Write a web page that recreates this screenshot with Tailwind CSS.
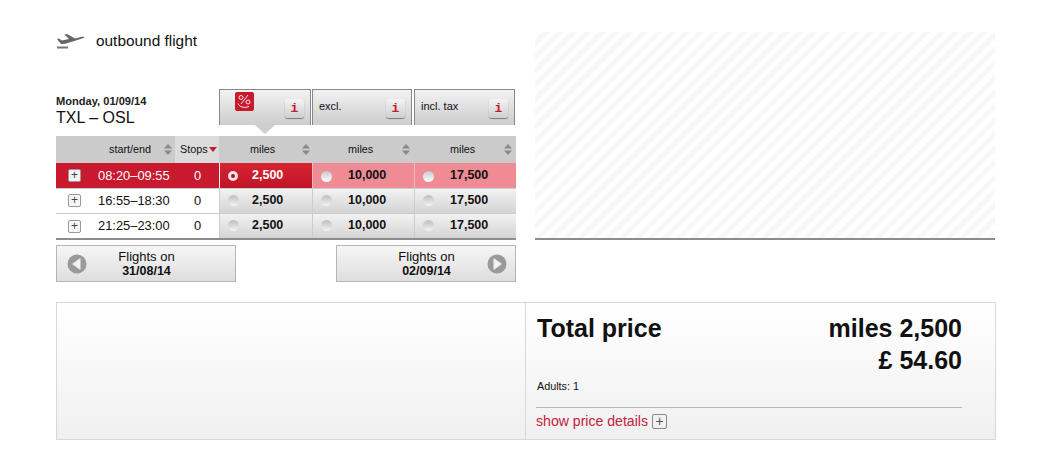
<!DOCTYPE html>
<html lang="en">
<head>
  <meta charset="UTF-8" />
  <title>outbound flight</title>
  <script src="https://cdn.jsdelivr.net/npm/@tailwindcss/browser@4"></script>
</head>
<body class="bg-white font-['Liberation_Sans',Arial,sans-serif] text-[#111]">
  <div class="w-[1048px] h-[450px] overflow-hidden pt-[32px] pl-[56px]">
    <div class="flex h-[250px]">

      <!-- left column -->
      <div class="w-[460px]">
        <div class="h-[57px] flex items-start">
          <svg class="w-[28px] h-[15px] mt-[2px] ml-[1px]" viewBox="0 0 28 15">
            <path fill="#666" d="M0 5l2-.5 3 2 7-1.500L7.500.5 10 0l8 4.500 6-1.500c2-.5 3-.3 3.300 0 0 .7-1 1.200-3 1.800L14 8l-6 1.700L4 10z"/>
            <rect x="0" y="12.500" width="11" height="2" fill="#777"/>
          </svg>
          <span class="ml-[11px] text-[15.400px] leading-[18px]">outbound flight</span>
        </div>

        <!-- tabs -->
        <div class="flex h-[47px] items-end">
          <div class="w-[163px] pb-[7px]">
            <div class="text-[11.100px] leading-[12px] font-bold text-[#222]">Monday, 01/09/14</div>
            <div class="text-[16px] leading-[22px]">TXL – OSL</div>
          </div>
          <div class="relative w-[92px] h-[36px] mb-[11px] border border-b-0 border-[#888] bg-linear-to-b from-[#f2f2f2] to-[#cdcdcd]">
            <svg class="absolute left-[15px] top-[2px] w-[19px] h-[19px]" viewBox="0 0 19 19">
              <rect width="19" height="19" rx="2" fill="#c8192e"/>
              <circle cx="6" cy="5.500" r="2" fill="none" stroke="#fff" stroke-width="0.900"/>
              <circle cx="13" cy="10" r="2" fill="none" stroke="#fff" stroke-width="0.900"/>
              <path d="M13 3L6 12M3 11.500c1.500 3.500 6 5 11 3" fill="none" stroke="#fff" stroke-width="0.900"/>
            </svg>
            <span class="absolute right-[6px] top-[9px] w-[19px] h-[19px] rounded-[3px] bg-linear-to-b from-[#f4f4f4] to-[#cfcfcf] shadow-[0_1px_1px_#777] text-center font-['Liberation_Mono',monospace] font-bold text-[13px] leading-[19px] text-[#c8192e]">i</span>
            <span class="absolute left-[35px] top-[35px] w-0 h-0 border-x-[10px] border-x-transparent border-t-[9px] border-t-[#cdcdcd]"></span>
          </div>
          <div class="relative w-[100px] h-[36px] mb-[11px] ml-px border border-b-0 border-[#888] bg-linear-to-b from-[#f2f2f2] to-[#cdcdcd] pl-[6px] pt-[10px] text-[11px] leading-[13px]">
            excl.
            <span class="absolute right-[6px] top-[9px] w-[19px] h-[19px] rounded-[3px] bg-linear-to-b from-[#f4f4f4] to-[#cfcfcf] shadow-[0_1px_1px_#777] text-center font-['Liberation_Mono',monospace] font-bold text-[13px] leading-[19px] text-[#c8192e]">i</span>
          </div>
          <div class="relative w-[101px] h-[36px] mb-[11px] ml-[2px] border border-b-0 border-[#888] bg-linear-to-b from-[#f2f2f2] to-[#cdcdcd] pl-[6px] pt-[10px] text-[11px] leading-[13px]">
            incl. tax
            <span class="absolute right-[6px] top-[9px] w-[19px] h-[19px] rounded-[3px] bg-linear-to-b from-[#f4f4f4] to-[#cfcfcf] shadow-[0_1px_1px_#777] text-center font-['Liberation_Mono',monospace] font-bold text-[13px] leading-[19px] text-[#c8192e]">i</span>
          </div>
        </div>

        <!-- flight table -->
        <div class="border-b-2 border-[#8c8c8c]">
          <div class="grid grid-cols-[119px_44px_93px_102px_102px] h-[27px] bg-[#cbcbcb] text-[10.800px] items-center">
            <div class="relative h-full leading-[27px] pl-[53px]">start/end
              <svg class="absolute left-[108px] top-[8px] w-[8px] h-[11px]" viewBox="0 0 8 11"><path fill="#8a8a8a" d="M4 0l4 4.500H0zM4 11L0 6.500h8z"/></svg>
            </div>
            <div class="relative h-full leading-[27px] bg-[#dcdcdc] pl-[5px]">Stops
              <svg class="absolute left-[34px] top-[11px] w-[8px] h-[5px]" viewBox="0 0 8 5"><path fill="#c8192e" d="M0 0h8L4 5z"/></svg>
            </div>
            <div class="relative h-full leading-[27px] pl-[31px]">miles
              <svg class="absolute left-[83px] top-[8px] w-[8px] h-[11px]" viewBox="0 0 8 11"><path fill="#8a8a8a" d="M4 0l4 4.500H0zM4 11L0 6.500h8z"/></svg>
            </div>
            <div class="relative h-full leading-[27px] pl-[36px]">miles
              <svg class="absolute left-[90px] top-[8px] w-[8px] h-[11px]" viewBox="0 0 8 11"><path fill="#8a8a8a" d="M4 0l4 4.500H0zM4 11L0 6.500h8z"/></svg>
            </div>
            <div class="relative h-full leading-[27px] pl-[36px]">miles
              <svg class="absolute left-[90px] top-[8px] w-[8px] h-[11px]" viewBox="0 0 8 11"><path fill="#8a8a8a" d="M4 0l4 4.500H0zM4 11L0 6.500h8z"/></svg>
            </div>
          </div>

          <!-- selected row -->
          <div class="grid grid-cols-[163px_93px_102px_102px] h-[25px] text-[12.900px] leading-[25px]">
            <div class="flex bg-[#c8192e] text-white">
              <span class="w-[13px] h-[13px] mt-[6px] ml-[12px] rounded-[2px] border border-[#999] bg-[#f2f2f2] text-[#444] text-center text-[12px] leading-[10px]">+</span>
              <span class="ml-[17px] w-[72px]">08:20–09:55</span>
              <span class="ml-[24px]">0</span>
            </div>
            <div class="flex border-l border-white bg-linear-to-b from-[#d6242f] to-[#c01528] text-white font-bold text-[12.500px]">
              <span class="w-[10px] h-[10px] mt-[8px] ml-[8px] rounded-full bg-[#b01020] border-[3px] border-[#f4e4e6]"></span>
              <span class="ml-[14px]">2,500</span>
            </div>
            <div class="flex border-l border-[#f3b8bd] bg-[#ee8b94] font-bold text-[12.500px]">
              <span class="w-[11px] h-[11px] mt-[8px] ml-[8px] rounded-full bg-linear-to-b from-[#c9c9c9] to-white"></span>
              <span class="ml-[16px]">10,000</span>
            </div>
            <div class="flex border-l border-[#f3b8bd] bg-[#ee8b94] font-bold text-[12.500px]">
              <span class="w-[11px] h-[11px] mt-[8px] ml-[8px] rounded-full bg-linear-to-b from-[#c9c9c9] to-white"></span>
              <span class="ml-[16px]">17,500</span>
            </div>
          </div>

          <div class="grid grid-cols-[163px_93px_102px_102px] h-[25px] text-[12.900px] leading-[23px] border-t border-[#ccc]">
            <div class="flex bg-white">
              <span class="w-[13px] h-[13px] mt-[5px] ml-[12px] rounded-[2px] border border-[#999] bg-[#f6f6f6] text-[#444] text-center text-[12px] leading-[10px]">+</span>
              <span class="ml-[17px] w-[72px]">16:55–18:30</span>
              <span class="ml-[24px]">0</span>
            </div>
            <div class="flex border-l border-[#ccc] bg-linear-to-b from-[#f2f2f2] to-[#d4d4d4] font-bold text-[12.500px]">
              <span class="w-[11px] h-[11px] mt-[6px] ml-[8px] rounded-full bg-linear-to-b from-[#bdbdbd] to-[#f4f4f4]"></span>
              <span class="ml-[13px]">2,500</span>
            </div>
            <div class="flex border-l border-[#ccc] bg-linear-to-b from-[#f2f2f2] to-[#d4d4d4] font-bold text-[12.500px]">
              <span class="w-[11px] h-[11px] mt-[6px] ml-[8px] rounded-full bg-linear-to-b from-[#bdbdbd] to-[#f4f4f4]"></span>
              <span class="ml-[16px]">10,000</span>
            </div>
            <div class="flex border-l border-[#ccc] bg-linear-to-b from-[#f2f2f2] to-[#d4d4d4] font-bold text-[12.500px]">
              <span class="w-[11px] h-[11px] mt-[6px] ml-[8px] rounded-full bg-linear-to-b from-[#bdbdbd] to-[#f4f4f4]"></span>
              <span class="ml-[16px]">17,500</span>
            </div>
          </div>

          <div class="grid grid-cols-[163px_93px_102px_102px] h-[25px] text-[12.900px] leading-[23px] border-t border-[#ccc]">
            <div class="flex bg-white">
              <span class="w-[13px] h-[13px] mt-[6px] ml-[12px] rounded-[2px] border border-[#999] bg-[#f6f6f6] text-[#444] text-center text-[12px] leading-[10px]">+</span>
              <span class="ml-[17px] w-[72px]">21:25–23:00</span>
              <span class="ml-[24px]">0</span>
            </div>
            <div class="flex border-l border-[#ccc] bg-linear-to-b from-[#f2f2f2] to-[#d4d4d4] font-bold text-[12.500px]">
              <span class="w-[11px] h-[11px] mt-[6px] ml-[8px] rounded-full bg-linear-to-b from-[#bdbdbd] to-[#f4f4f4]"></span>
              <span class="ml-[13px]">2,500</span>
            </div>
            <div class="flex border-l border-[#ccc] bg-linear-to-b from-[#f2f2f2] to-[#d4d4d4] font-bold text-[12.500px]">
              <span class="w-[11px] h-[11px] mt-[6px] ml-[8px] rounded-full bg-linear-to-b from-[#bdbdbd] to-[#f4f4f4]"></span>
              <span class="ml-[16px]">10,000</span>
            </div>
            <div class="flex border-l border-[#ccc] bg-linear-to-b from-[#f2f2f2] to-[#d4d4d4] font-bold text-[12.500px]">
              <span class="w-[11px] h-[11px] mt-[6px] ml-[8px] rounded-full bg-linear-to-b from-[#bdbdbd] to-[#f4f4f4]"></span>
              <span class="ml-[16px]">17,500</span>
            </div>
          </div>
        </div>

        <!-- prev / next day -->
        <div class="flex justify-between mt-[5px]">
          <div class="flex items-center w-[180px] h-[37px] border border-[#b5b5b5] bg-linear-to-b from-[#f6f6f6] to-[#dedede]">
            <svg class="w-[20px] h-[20px] ml-[10px]" viewBox="0 0 20 20"><circle cx="10" cy="10" r="9.500" fill="#9a9a9a"/><path fill="#f2f2f2" d="M13.500 4v12L5 10z"/></svg>
            <div class="w-[101px] ml-[9px] text-center text-[13px] leading-[14px]">Flights on<br><b class="text-[12.500px]">31/08/14</b></div>
          </div>
          <div class="flex items-center w-[180px] h-[37px] border border-[#b5b5b5] bg-linear-to-b from-[#f6f6f6] to-[#dedede]">
            <div class="w-[99px] ml-[40px] text-center text-[13px] leading-[14px]">Flights on<br><b class="text-[12.500px]">02/09/14</b></div>
            <svg class="w-[20px] h-[20px] ml-[11px]" viewBox="0 0 20 20"><circle cx="10" cy="10" r="9.500" fill="#9a9a9a"/><path fill="#f2f2f2" d="M6.500 4v12L15 10z"/></svg>
          </div>
        </div>
      </div>

      <!-- striped panel -->
      <div class="w-[460px] h-[208px] ml-[19px] border-b-2 border-[#8c8c8c] bg-[repeating-linear-gradient(135deg,#ffffff_0,#ffffff_5px,#f7f7f7_5px,#f7f7f7_10px)]"></div>
    </div>

    <!-- total price -->
    <div class="flex w-[940px] h-[138px] mt-[20px] border border-[#d8d8d8] bg-linear-to-b from-white to-[#f0f0f0]">
      <div class="w-[469px] border-r border-[#d8d8d8]"></div>
      <div class="w-[426px] ml-[10px]">
        <div class="flex justify-between items-start font-bold text-[25px] leading-[32px] pt-[9px]">
          <span class="ml-px">Total price</span>
          <span class="text-right">miles 2,500<br>£ 54.60</span>
        </div>
        <div class="mt-[3px] ml-px text-[10.800px] leading-[14px]">Adults: 1</div>
        <div class="mt-[14px] pt-[4px] border-t border-[#b9b9b9] flex items-center text-[14.100px] leading-[18px] text-[#c4203c]">
          show price details
          <span class="w-[15px] h-[15px] ml-[4px] rounded-[2px] border border-[#888] text-[#555] text-center text-[14px] leading-[12px]">+</span>
        </div>
      </div>
    </div>
  </div>
</body>
</html>
